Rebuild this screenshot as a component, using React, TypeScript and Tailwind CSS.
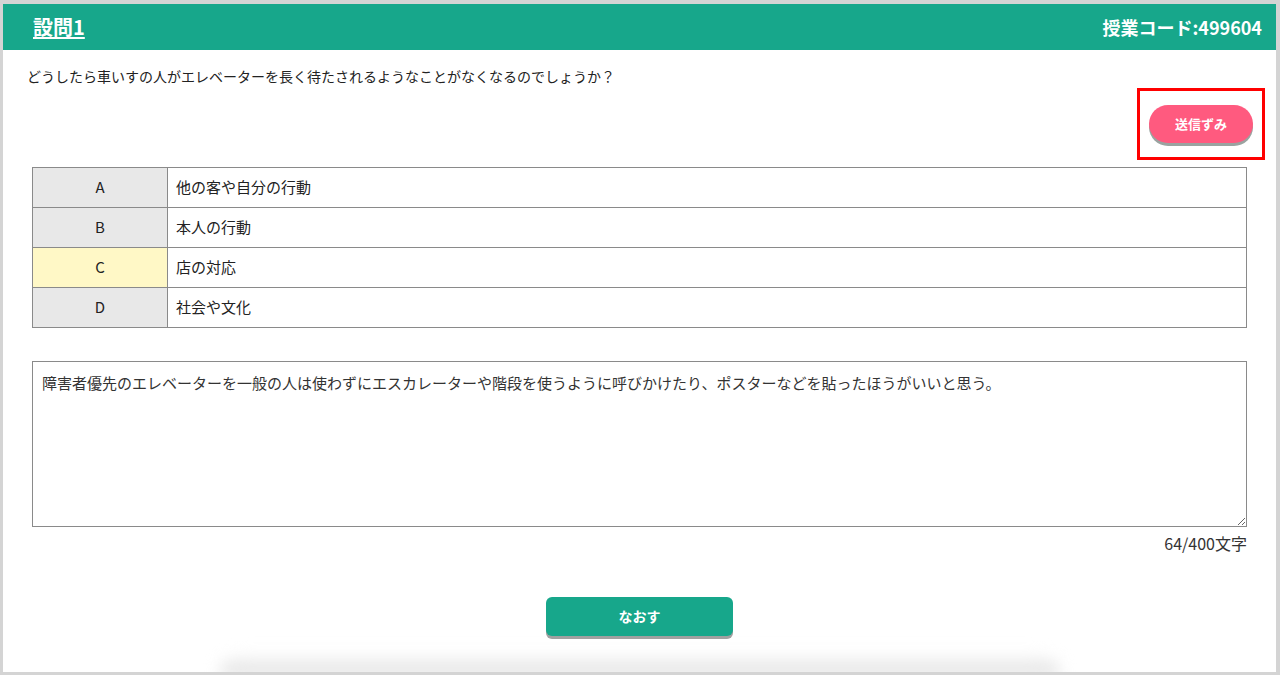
const font = { fontFamily: '"Noto Sans CJK JP", "Noto Sans", sans-serif' };

const choices = [
  { key: "A", label: "他の客や自分の行動", active: false },
  { key: "B", label: "本人の行動", active: false },
  { key: "C", label: "店の対応", active: true },
  { key: "D", label: "社会や文化", active: false },
];

const answer =
  "障害者優先のエレベーターを一般の人は使わずにエスカレーターや階段を使うように呼びかけたり、ポスターなどを貼ったほうがいいと思う。";

export default function App() {
  return (
    <div
      className="flex h-[675px] flex-col overflow-hidden border-t-4 border-r-4 border-b-[3px] border-l-[3px] border-[#d4d4d4] bg-white text-[#222]"
      style={font}
    >
      <header className="flex h-[46px] shrink-0 items-center justify-between bg-[#17a78b] pr-[14px] pl-[30px] text-white">
        <h1 className="text-[20px] font-bold underline underline-offset-2">設問1</h1>
        <p className="text-[18px] font-bold">授業コード:499604</p>
      </header>

      <main className="flex flex-1 flex-col">
        <p className="mt-[17px] pl-[24px] text-[14px] leading-[18px]">
          どうしたら車いすの人がエレベーターを長く待たされるようなことがなくなるのでしょうか？
        </p>

        <div className="mt-[3px] mr-[11px] flex justify-end">
          <div className="flex h-[72px] w-[128px] items-center justify-center border-[3px] border-[#ff0000]">
            <button
              type="button"
              className="h-[38px] w-[104px] rounded-full bg-[#ff5a7f] text-[13px] font-bold text-white shadow-[0_3px_0_#9aa3a0]"
            >
              送信ずみ
            </button>
          </div>
        </div>

        <div className="mt-[7px] px-[29px]">
          <table className="w-full border-collapse text-[15px]">
            <tbody>
              {choices.map((c) => (
                <tr key={c.key} className="h-[40px]">
                  <td
                    className={`w-[135px] border border-[#8a8a8a] text-center ${
                      c.active ? "bg-[#fff8c6]" : "bg-[#e8e8e8]"
                    }`}
                  >
                    {c.key}
                  </td>
                  <td className="border border-[#8a8a8a] pl-[8px]">{c.label}</td>
                </tr>
              ))}
            </tbody>
          </table>

          <textarea
            readOnly
            value={answer}
            className="mt-[33px] block h-[166px] w-full resize-y border border-[#8a8a8a] px-[9px] py-[11px] text-[15px] leading-5 text-[#333] outline-none"
            style={font}
          />
          <p className="mt-[4px] text-right text-[16px] leading-6 text-[#333]">64/400文字</p>
        </div>

        <div className="mt-[42px] flex justify-center">
          <button
            type="button"
            className="h-[39px] w-[187px] rounded-md bg-[#17a78b] text-[14px] font-bold text-white shadow-[0_3px_0_#a0a0a0]"
          >
            なおす
          </button>
        </div>

        <div className="mt-auto flex justify-center">
          <div className="h-[22px] w-[840px] translate-y-[4px] rounded-t-[60px] bg-gradient-to-b from-white to-[#d8d8d8] blur-[8px]" />
        </div>
      </main>
    </div>
  );
}
